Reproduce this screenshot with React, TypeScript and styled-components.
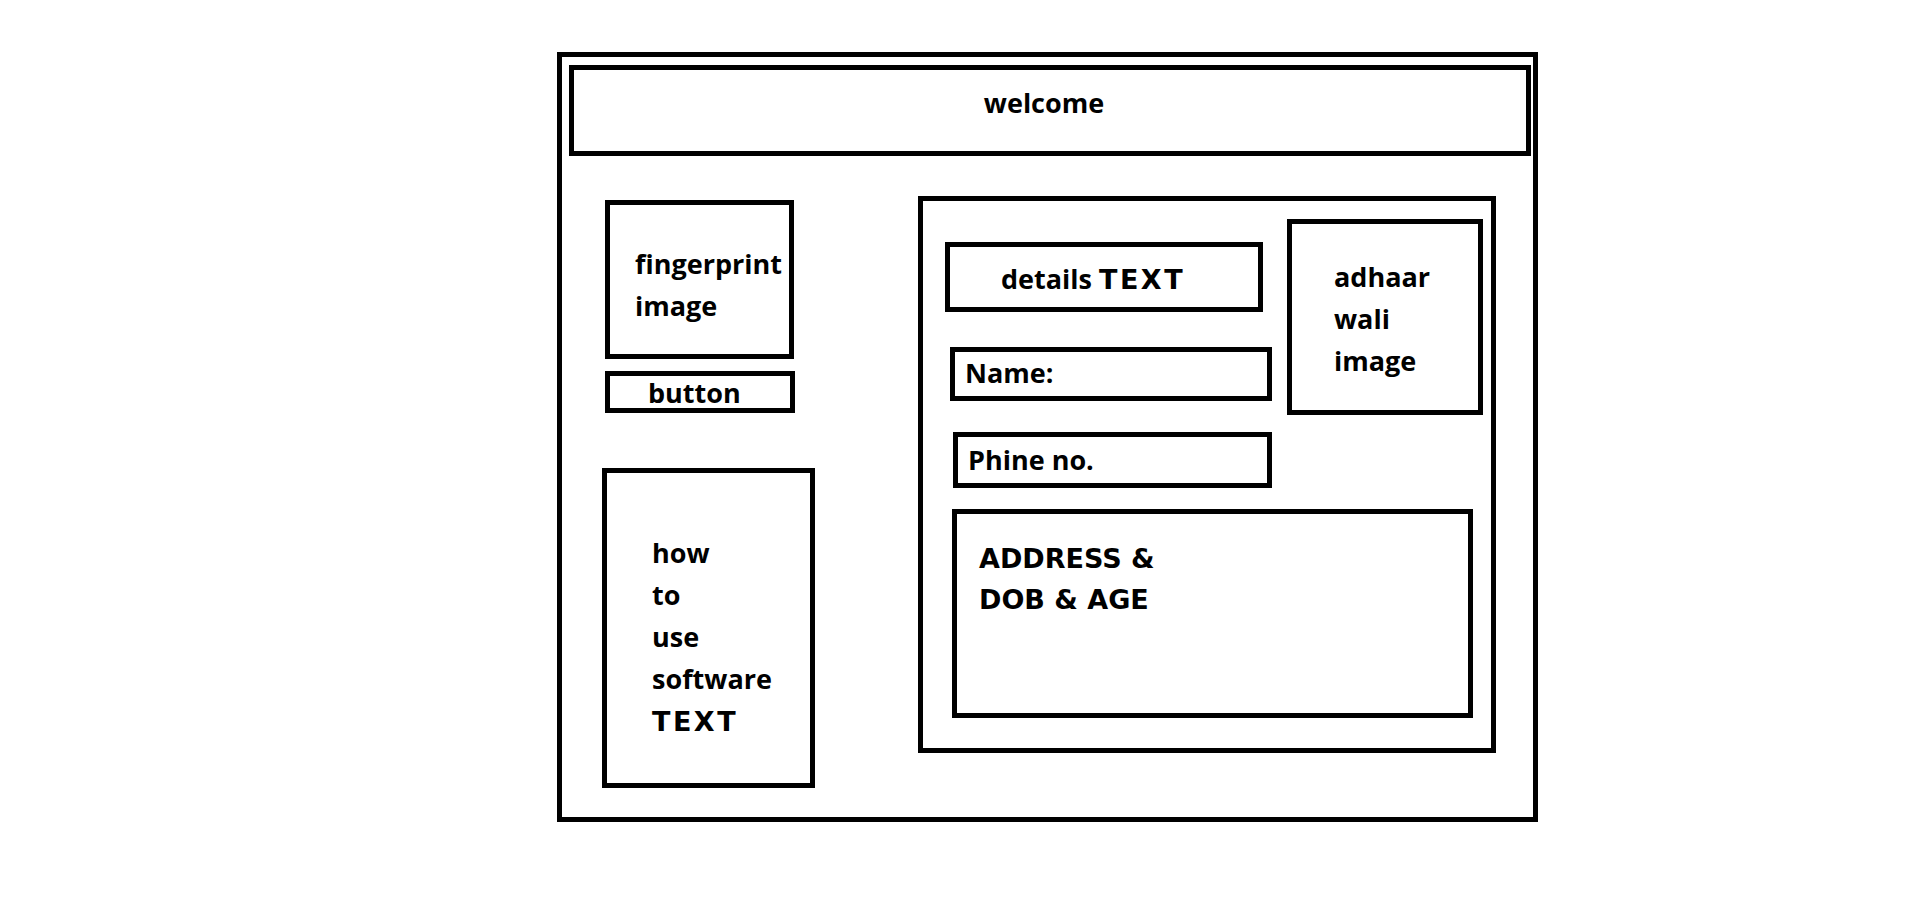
import React from 'react';
import styled, { createGlobalStyle } from 'styled-components';

const GlobalStyle = createGlobalStyle`
  html, body {
    margin: 0;
    padding: 0;
    background: #ffffff;
  }
  body {
    font-family: "Open Sans", "Liberation Sans", sans-serif;
    font-weight: 700;
    font-size: 27px;
    color: #000000;
  }
  * {
    box-sizing: border-box;
  }
`;

const line = '5px solid #000';

const Frame = styled.div`
  margin: 52px 0 0 557px;
  width: 981px;
  height: 770px;
  border: ${line};
  padding: 8px 2px 0 7px;
`;

const WelcomeBar = styled.header`
  width: 962px;
  height: 91px;
  border: ${line};
  padding: 12px 12px 0 0;
  text-align: center;
  line-height: 42px;
`;

const Body = styled.div`
  display: flex;
  align-items: flex-start;
`;

const LeftColumn = styled.aside`
  display: flex;
  flex-direction: column;
  align-items: flex-start;
  margin-left: 33px;
  padding-top: 44px;
`;

const FingerprintBox = styled.div`
  margin-left: 3px;
  width: 189px;
  height: 159px;
  border: ${line};
  padding: 38px 0 0 25px;
  line-height: 42px;
`;

const ScanButton = styled.button`
  margin: 12px 0 0 3px;
  width: 190px;
  height: 42px;
  border: ${line};
  background: #fff;
  padding: 0 0 0 38px;
  text-align: left;
  font: inherit;
  color: inherit;
  line-height: 29px;
`;

const HelpBox = styled.div`
  margin-top: 55px;
  width: 213px;
  height: 320px;
  border: ${line};
  padding: 59px 0 0 45px;
  line-height: 42px;
`;

const Caps = styled.span`
  font-family: "DejaVu Sans", "Liberation Sans", sans-serif;
  font-weight: 700;
  letter-spacing: 2.5px;
`;

const DetailsPanel = styled.section`
  margin: 40px 0 0 103px;
  width: 578px;
  height: 557px;
  border: ${line};
`;

const TopRow = styled.div`
  display: flex;
  align-items: flex-start;
`;

const Fields = styled.div`
  display: flex;
  flex-direction: column;
  align-items: flex-start;
  padding-left: 22px;
`;

const HeadingBox = styled.div`
  margin-top: 41px;
  width: 318px;
  height: 70px;
  border: ${line};
  padding: 11px 0 0 51px;
  line-height: 42px;
`;

const FieldBox = styled.div<{ $top: number; $left: number; $width: number; $height: number; $pad: number }>`
  margin-top: ${p => p.$top}px;
  margin-left: ${p => p.$left}px;
  width: ${p => p.$width}px;
  height: ${p => p.$height}px;
  border: ${line};
  padding: ${p => p.$pad}px 0 0 10px;
  line-height: 30px;
`;

const PhotoBox = styled.div`
  margin: 18px 0 0 15px;
  width: 196px;
  height: 196px;
  border: ${line};
  padding: 32px 0 0 42px;
  line-height: 42px;
`;

const AddressBox = styled.div`
  margin: 21px 0 0 29px;
  width: 521px;
  height: 209px;
  border: ${line};
  padding: 24px 0 0 22px;
  font-family: "DejaVu Sans", "Liberation Sans", sans-serif;
  line-height: 41px;
`;

const App: React.FC = () => {
  return (
    <>
      <GlobalStyle />
      <Frame>
        <WelcomeBar>welcome</WelcomeBar>
        <Body>
          <LeftColumn>
            <FingerprintBox>
              fingerprint
              <br />
              image
            </FingerprintBox>
            <ScanButton type="button">button</ScanButton>
            <HelpBox>
              how
              <br />
              to
              <br />
              use
              <br />
              software
              <br />
              <Caps>TEXT</Caps>
            </HelpBox>
          </LeftColumn>
          <DetailsPanel>
            <TopRow>
              <Fields>
                <HeadingBox>
                  details <Caps>TEXT</Caps>
                </HeadingBox>
                <FieldBox $top={35} $left={5} $width={322} $height={54} $pad={6}>
                  Name:
                </FieldBox>
                <FieldBox $top={31} $left={8} $width={319} $height={56} $pad={8}>
                  Phine no.
                </FieldBox>
              </Fields>
              <PhotoBox>
                adhaar
                <br />
                wali
                <br />
                image
              </PhotoBox>
            </TopRow>
            <AddressBox>
              ADDRESS &amp;
              <br />
              DOB &amp; AGE
            </AddressBox>
          </DetailsPanel>
        </Body>
      </Frame>
    </>
  );
};

export default App;
